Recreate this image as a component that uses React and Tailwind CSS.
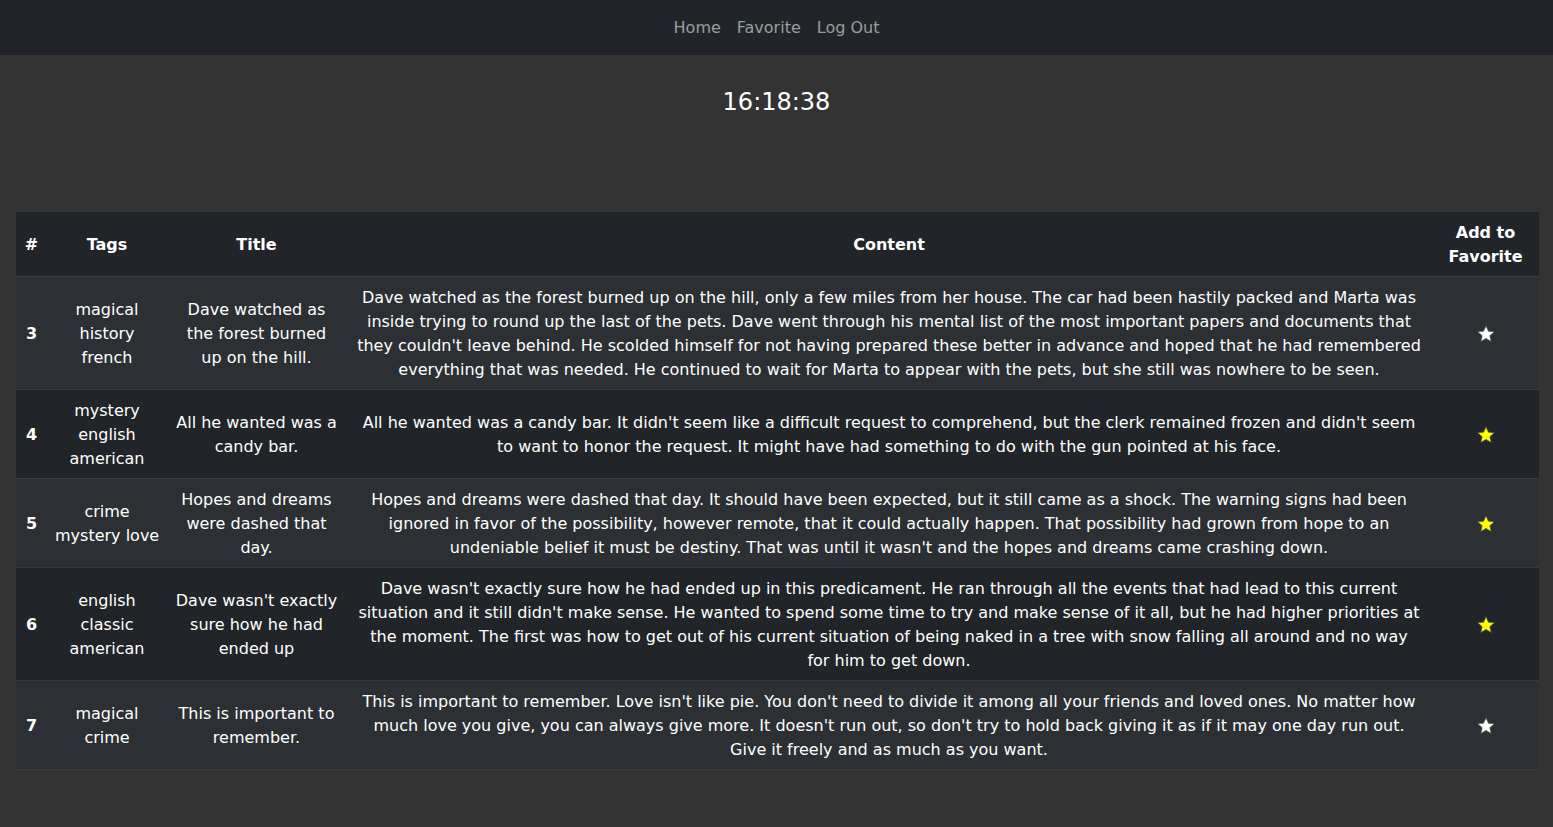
import React, { useState } from "react";

const rows = [
  {
    id: 3,
    tags: ["magical", "history", "french"],
    title: ["Dave watched as", "the forest burned", "up on the hill."],
    content: [
      "Dave watched as the forest burned up on the hill, only a few miles from her house. The car had been hastily packed and Marta was",
      "inside trying to round up the last of the pets. Dave went through his mental list of the most important papers and documents that",
      "they couldn't leave behind. He scolded himself for not having prepared these better in advance and hoped that he had remembered",
      "everything that was needed. He continued to wait for Marta to appear with the pets, but she still was nowhere to be seen.",
    ],
    fav: false,
  },
  {
    id: 4,
    tags: ["mystery", "english", "american"],
    title: ["All he wanted was a", "candy bar."],
    content: [
      "All he wanted was a candy bar. It didn't seem like a difficult request to comprehend, but the clerk remained frozen and didn't seem",
      "to want to honor the request. It might have had something to do with the gun pointed at his face.",
    ],
    fav: true,
  },
  {
    id: 5,
    tags: ["crime", "mystery love"],
    title: ["Hopes and dreams", "were dashed that", "day."],
    content: [
      "Hopes and dreams were dashed that day. It should have been expected, but it still came as a shock. The warning signs had been",
      "ignored in favor of the possibility, however remote, that it could actually happen. That possibility had grown from hope to an",
      "undeniable belief it must be destiny. That was until it wasn't and the hopes and dreams came crashing down.",
    ],
    fav: true,
  },
  {
    id: 6,
    tags: ["english", "classic", "american"],
    title: ["Dave wasn't exactly", "sure how he had", "ended up"],
    content: [
      "Dave wasn't exactly sure how he had ended up in this predicament. He ran through all the events that had lead to this current",
      "situation and it still didn't make sense. He wanted to spend some time to try and make sense of it all, but he had higher priorities at",
      "the moment. The first was how to get out of his current situation of being naked in a tree with snow falling all around and no way",
      "for him to get down.",
    ],
    fav: true,
  },
  {
    id: 7,
    tags: ["magical", "crime"],
    title: ["This is important to", "remember."],
    content: [
      "This is important to remember. Love isn't like pie. You don't need to divide it among all your friends and loved ones. No matter how",
      "much love you give, you can always give more. It doesn't run out, so don't try to hold back giving it as if it may one day run out.",
      "Give it freely and as much as you want.",
    ],
    fav: false,
  },
];

function Star({ on }) {
  return (
    <svg width="20" height="20" viewBox="0 0 24 24" className="inline-block">
      <polygon
        points="12,2 14.9,8.6 22,9.3 16.6,14 18.2,21 12,17.3 5.8,21 7.4,14 2,9.3 9.1,8.6"
        fill={on ? "#ffff00" : "#ffffff"}
        stroke="#4a4a3a"
        strokeWidth="0.8"
        strokeLinejoin="round"
      />
    </svg>
  );
}

function Lines({ items }) {
  return items.map((t, i) => (
    <React.Fragment key={i}>
      {t}
      {i < items.length - 1 && <br />}
    </React.Fragment>
  ));
}

export default function App() {
  const [now] = useState("16:18:38");

  return (
    <div className="min-h-[827px] bg-[#333333] text-white font-['DejaVu_Sans',sans-serif] text-[16px] leading-6">
      {/* Navbar */}
      <nav className="h-[55px] bg-[#212529] flex items-center justify-center gap-4">
        <a className="text-[#9a9da0]">Home</a>
        <a className="text-[#9a9da0]">Favorite</a>
        <a className="text-[#9a9da0]">Log Out</a>
      </nav>

      {/* Clock */}
      <div className="pt-[31px] pb-[-1px] text-center text-[24px] leading-[32px]">{now}</div>

      {/* Table */}
      <div className="pl-4 pr-[14px] pt-[94px]">
        <table className="w-full table-fixed border-collapse text-center whitespace-nowrap">
          <colgroup>
            <col className="w-[31px]" />
            <col className="w-[120px]" />
            <col className="w-[179px]" />
            <col />
            <col className="w-[107px]" />
          </colgroup>
          <thead>
            <tr className="bg-[#212529] border-b border-[#3a3f44]">
              <th className="pt-[9px] pb-[7px] font-bold">#</th>
              <th className="px-2 pt-[9px] pb-[7px] font-bold">Tags</th>
              <th className="px-2 pt-[9px] pb-[7px] font-bold">Title</th>
              <th className="px-2 pt-[9px] pb-[7px] font-bold">Content</th>
              <th className="px-2 pt-[9px] pb-[7px] font-bold">
                Add to
                <br />
                Favorite
              </th>
            </tr>
          </thead>
          <tbody>
            {rows.map((r, i) => (
              <tr
                key={r.id}
                className={`border-b border-[#373b3e] ${i % 2 === 0 ? "bg-[#2c3034]" : "bg-[#212529]"}`}
              >
                <th className="pt-[9px] pb-[7px] font-bold">{r.id}</th>
                <td className="px-2 pt-[9px] pb-[7px]">
                  <Lines items={r.tags} />
                </td>
                <td className="px-2 pt-[9px] pb-[7px]">
                  <Lines items={r.title} />
                </td>
                <td className="px-2 pt-[9px] pb-[7px]">
                  <Lines items={r.content} />
                </td>
                <td className="px-2 pt-[8px] pb-[8px]">
                  <Star on={r.fav} />
                </td>
              </tr>
            ))}
          </tbody>
        </table>
      </div>
    </div>
  );
}
